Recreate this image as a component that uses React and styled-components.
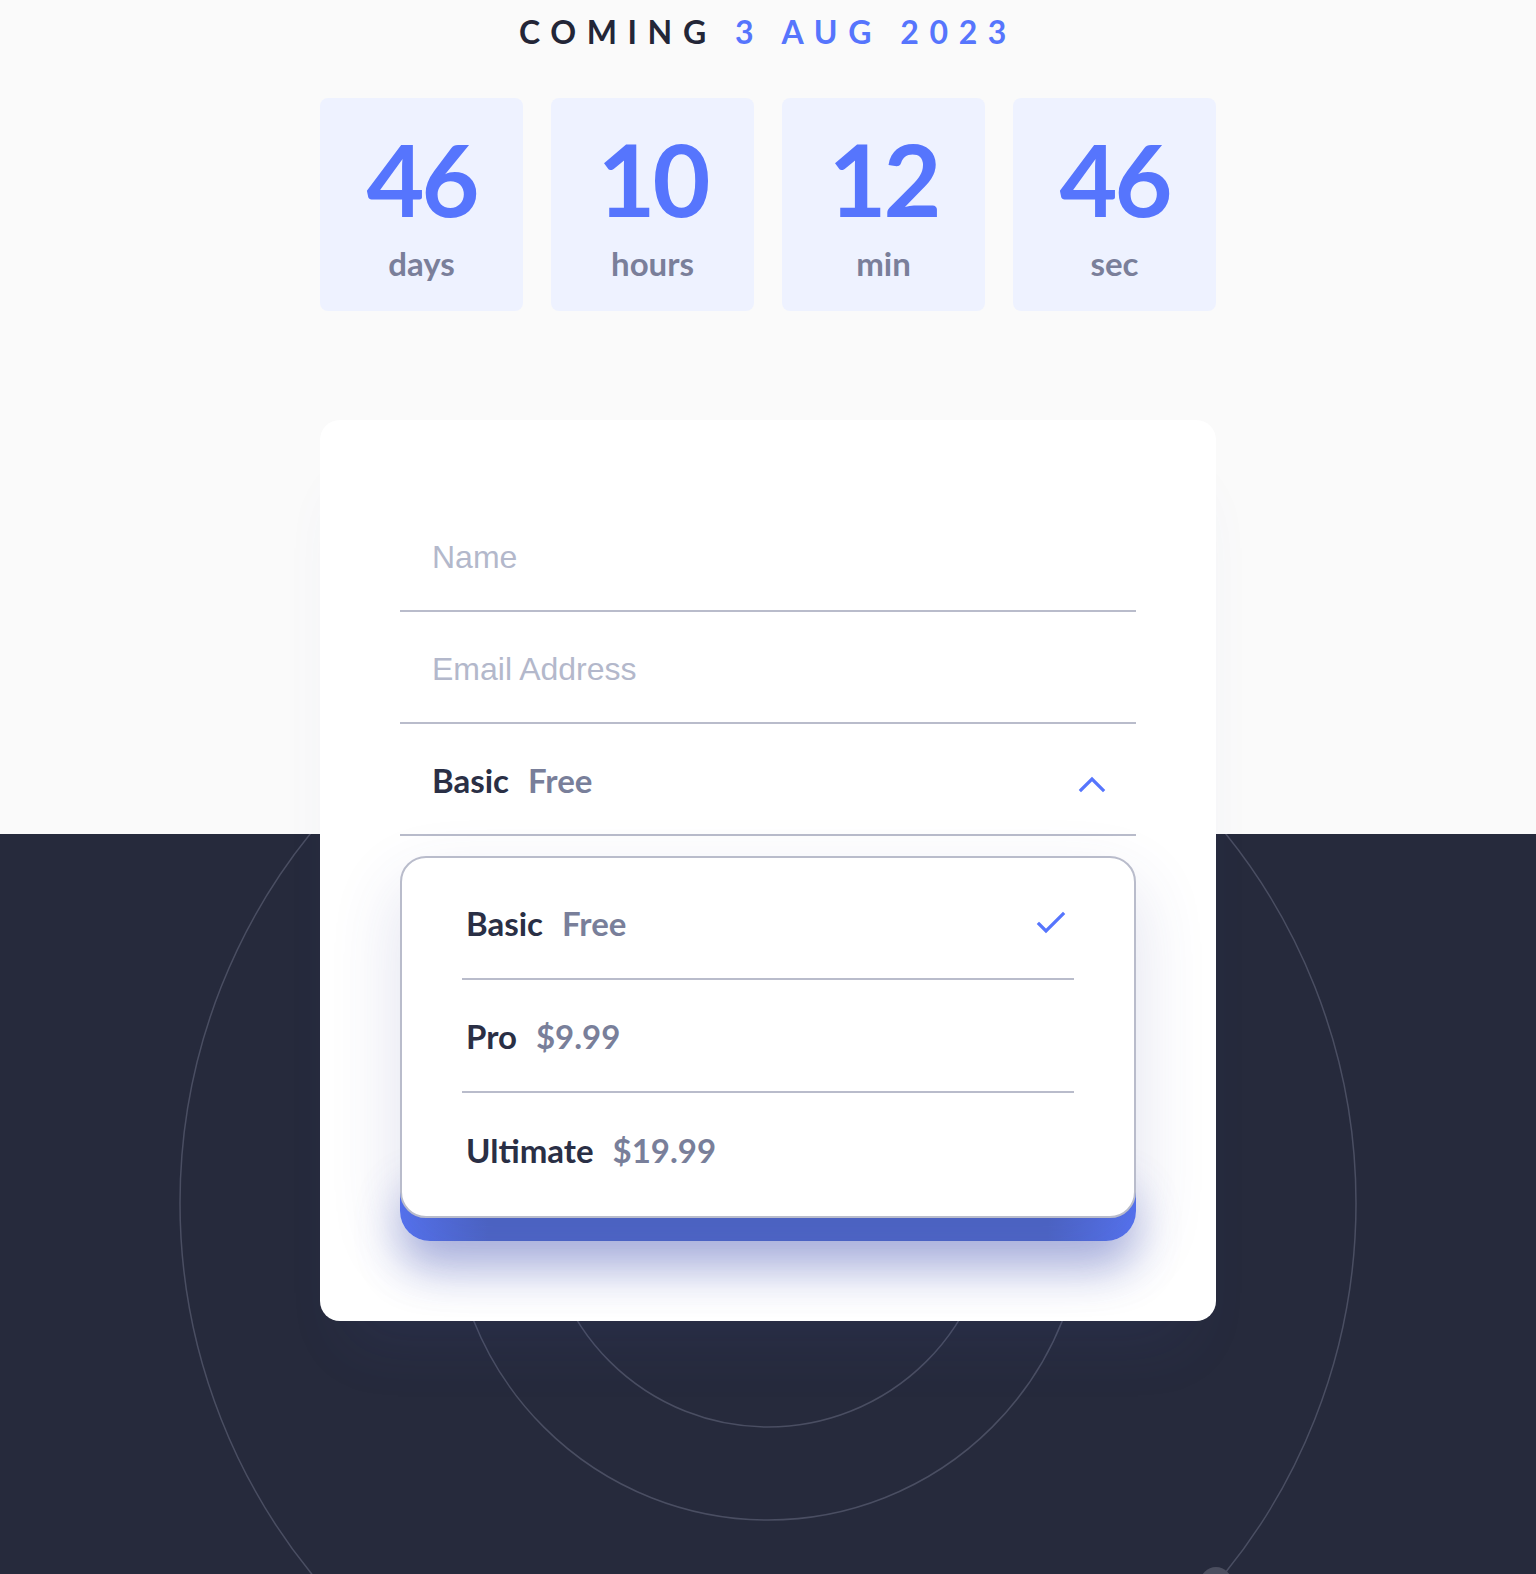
import React from 'react';
import styled, { createGlobalStyle } from 'styled-components';

const GlobalStyle = createGlobalStyle`
  * {
    box-sizing: border-box;
  }

  body {
    margin: 0;
    background: #fafafa;
    font-family: Lato, "Noto Sans", sans-serif;
  }
`;

const Page = styled.div`
  position: relative;
  height: 1574px;
  overflow: hidden;
  background: linear-gradient(to bottom, #fafafa 0, #fafafa 834px, #262a3c 834px, #262a3c 100%);
`;

const Orbits = styled.svg`
  position: absolute;
  top: 834px;
  left: 50%;
  transform: translateX(-50%);
`;

const Content = styled.main`
  position: relative;
  z-index: 1;
  width: 896px;
  margin: 0 auto;
  padding-top: 12px;
`;

const Heading = styled.h1`
  margin: 0;
  padding-left: 0;
  text-align: center;
  font-size: 32px;
  line-height: 40px;
  font-weight: 700;
  letter-spacing: 10.6px;
  color: #232637;
`;

const Accent = styled.span`
  color: #5675fd;
`;

const Countdown = styled.div`
  display: grid;
  grid-template-columns: repeat(4, 1fr);
  gap: 28px;
  margin-top: 46px;
`;

const TimeBox = styled.div`
  display: flex;
  flex-direction: column;
  align-items: center;
  padding: 30px 0 28px;
  border-radius: 8px;
  background: #eef2ff;
`;

const TimeValue = styled.span`
  font-size: 100px;
  line-height: 100px;
  font-weight: 700;
  letter-spacing: -3px;
  color: #5675fd;
`;

const TimeLabel = styled.span`
  margin-top: 15px;
  font-size: 33px;
  line-height: 40px;
  font-weight: 700;
  color: #7a7f9a;
`;

const Card = styled.form`
  margin-top: 109px;
  padding: 80px 80px 80px;
  border-radius: 20px;
  background: #ffffff;
  box-shadow: 0 50px 60px -30px rgba(70, 90, 190, 0.1);
`;

const Input = styled.input`
  display: block;
  width: 100%;
  height: 112px;
  padding: 4px 32px 0;
  border: none;
  border-bottom: 2px solid #b9bccb;
  outline: none;
  background: transparent;
  font-family: "Liberation Sans", Arial, sans-serif;
  font-size: 32px;
  color: #2a2f45;

  &::placeholder {
    color: #b3b8cb;
  }
`;

const SelectRow = styled.div`
  display: flex;
  align-items: center;
  justify-content: space-between;
  height: 112px;
  padding: 2px 30px 0 32px;
  border-bottom: 2px solid #b9bccb;
`;

const Plan = styled.span`
  font-size: 33px;
  font-weight: 700;
  color: #2a2f45;
`;

const Price = styled.span`
  margin-left: 19px;
  color: #797f9a;
`;

const Menu = styled.ul`
  position: relative;
  z-index: 2;
  margin: 20px 0 0;
  padding: 9px 60px 10px;
  list-style: none;
  border: 2px solid #b9bccb;
  border-radius: 26px;
  background: #ffffff;
  box-shadow: 0 30px 70px rgba(60, 70, 150, 0.16);
`;

const MenuItem = styled.li`
  display: flex;
  align-items: center;
  justify-content: space-between;
  height: 113px;
  padding: 0 8px 0 4px;
  border-bottom: ${(p) => (p.last ? 'none' : '2px solid #b9bccb')};
`;

const SubmitButton = styled.button`
  position: relative;
  z-index: 1;
  display: block;
  width: 100%;
  height: 80px;
  margin-top: -57px;
  border: none;
  border-radius: 30px;
  background: linear-gradient(90deg, #5674f2 0%, #4e67c8 12%, #4e67c8 88%, #5674f2 100%);
  box-shadow: 0 28px 44px rgba(78, 96, 190, 0.42);
  color: #ffffff;
  font-family: inherit;
  font-size: 20px;
  font-weight: 700;
`;

const ChevronUp = () => (
  <svg width="28" height="18" viewBox="0 0 28 18" fill="none" style={{ marginTop: 8 }}>
    <path d="M3 15 L14 4 L25 15" stroke="#5675fd" strokeWidth="3.2" strokeLinecap="square" />
  </svg>
);

const Check = () => (
  <svg width="30" height="24" viewBox="0 0 30 24" fill="none">
    <path d="M3 13 L10 20 L27 3" stroke="#5675fd" strokeWidth="3.2" strokeLinecap="square" />
  </svg>
);

const timer = [
  { value: '46', label: 'days' },
  { value: '10', label: 'hours' },
  { value: '12', label: 'min' },
  { value: '46', label: 'sec' },
];

const plans = [
  { name: 'Basic', price: 'Free', selected: true },
  { name: 'Pro', price: '$9.99' },
  { name: 'Ultimate', price: '$19.99' },
];

export default function App() {
  return (
    <>
      <GlobalStyle />
      <Page>
        <Orbits width="1536" height="740" viewBox="0 0 1536 740">
          <g fill="none" stroke="#4a4e62" strokeWidth="1.5">
            <circle cx="768" cy="369" r="224" />
            <circle cx="768" cy="369" r="317" />
            <circle cx="768" cy="369" r="588" />
          </g>
          <circle cx="1216" cy="749" r="16" fill="#4b4e5f" />
        </Orbits>
        <Content>
          <Heading>
            COMING <Accent>3 AUG 2023</Accent>
          </Heading>
          <Countdown>
            {timer.map((t) => (
              <TimeBox key={t.label}>
                <TimeValue>{t.value}</TimeValue>
                <TimeLabel>{t.label}</TimeLabel>
              </TimeBox>
            ))}
          </Countdown>
          <Card onSubmit={(e) => e.preventDefault()}>
            <Input type="text" placeholder="Name" />
            <Input type="email" placeholder="Email Address" />
            <SelectRow>
              <Plan>
                Basic<Price>Free</Price>
              </Plan>
              <ChevronUp />
            </SelectRow>
            <Menu>
              {plans.map((p, i) => (
                <MenuItem key={p.name} last={i === plans.length - 1}>
                  <Plan>
                    {p.name}
                    <Price>{p.price}</Price>
                  </Plan>
                  {p.selected && <Check />}
                </MenuItem>
              ))}
            </Menu>
            <SubmitButton type="submit">Get notified</SubmitButton>
          </Card>
        </Content>
      </Page>
    </>
  );
}
